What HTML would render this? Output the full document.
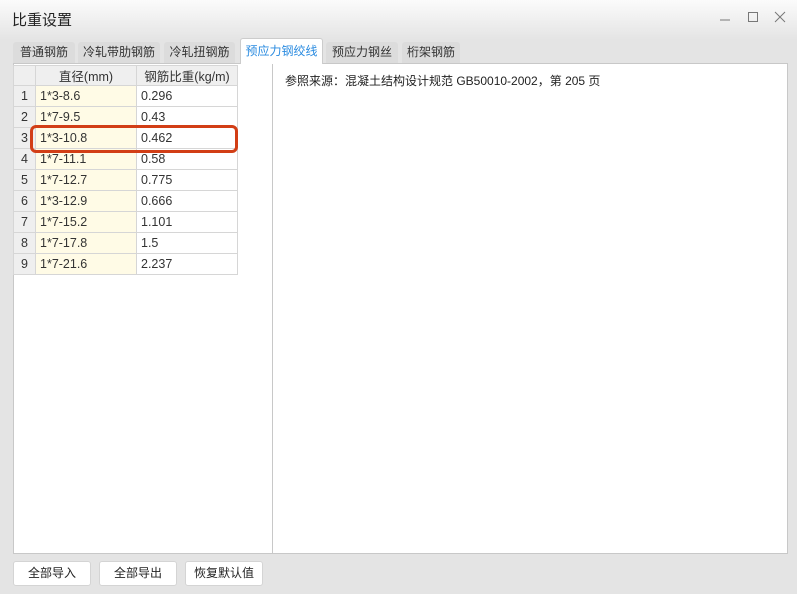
<!DOCTYPE html>
<html><head><meta charset="utf-8"><style>
*{margin:0;padding:0;box-sizing:border-box}
body{width:797px;height:594px;overflow:hidden;background:#e4e4e4;font-family:"Liberation Sans","Noto Sans CJK SC",sans-serif;font-size:12px;color:#333;position:relative}
.top{position:absolute;left:0;top:0;width:797px;height:40px;background:linear-gradient(#fbfbfb,#e4e4e4)}
.title{position:absolute;left:12px;top:9px;font-size:15px;color:#222}
.tab{position:absolute;top:42px;height:21px;background:#dcdcdc;border-radius:3px 3px 0 0;font-size:12px;line-height:21px;text-align:center;color:#333}
.tab.a{top:38px;height:26px;background:#fff;border:1px solid #ccc;border-bottom:none;color:#2a8be0;line-height:24px}
.left{position:absolute;left:13px;top:63px;width:260px;height:491px;background:#fff;border:1px solid #c8c8c8}
.right{position:absolute;left:273px;top:63px;width:515px;height:491px;background:#fff;border-top:1px solid #c8c8c8;border-right:1px solid #c8c8c8;border-bottom:1px solid #c8c8c8}
table{position:absolute;left:-1px;top:1px;border-collapse:collapse}
td{border:1px solid #d6d6d6;height:21px;padding:0 0 0 4px;font-size:12.5px;white-space:nowrap}
td.i{width:22px;background:#efefef;text-align:center;padding:0}
td.c1{width:101px;background:#fffbe6}
td.c2{width:101px}
tr.h td{background:#efefef;text-align:center;padding:0;height:20px}
.btn{position:absolute;top:561px;width:78px;height:25px;background:#fff;border:1px solid #d4d4d4;border-radius:3px;text-align:center;line-height:23px;font-size:12px;color:#222}
.hl{position:absolute;left:30px;top:125px;width:208px;height:28px;border:3px solid #d23e16;border-radius:6px}
</style></head><body>
<div class="top"></div>
<div class="title">比重设置</div>
<svg style="position:absolute;left:718px;top:10px" width="70" height="16">
<line x1="2" y1="10" x2="12" y2="10" stroke="#777" stroke-width="1"/>
<rect x="30.5" y="2.5" width="9" height="9" fill="none" stroke="#777"/>
<line x1="57" y1="2" x2="67" y2="12" stroke="#777"/><line x1="67" y1="2" x2="57" y2="12" stroke="#777"/>
</svg>
<div class="tab" style="left:13px;width:62px">普通钢筋</div>
<div class="tab" style="left:78px;width:82px">冷轧带肋钢筋</div>
<div class="tab" style="left:164px;width:71px">冷轧扭钢筋</div>
<div class="tab" style="left:326px;width:72px">预应力钢丝</div>
<div class="tab" style="left:402px;width:58px">桁架钢筋</div>
<div class="left">
<table>
<tr class="h"><td class="i"></td><td class="c1" style="background:#efefef">直径(mm)</td><td class="c2">钢筋比重(kg/m)</td></tr>
<tr><td class="i">1</td><td class="c1">1*3-8.6</td><td class="c2">0.296</td></tr>
<tr><td class="i">2</td><td class="c1">1*7-9.5</td><td class="c2">0.43</td></tr>
<tr><td class="i">3</td><td class="c1">1*3-10.8</td><td class="c2">0.462</td></tr>
<tr><td class="i">4</td><td class="c1">1*7-11.1</td><td class="c2">0.58</td></tr>
<tr><td class="i">5</td><td class="c1">1*7-12.7</td><td class="c2">0.775</td></tr>
<tr><td class="i">6</td><td class="c1">1*3-12.9</td><td class="c2">0.666</td></tr>
<tr><td class="i">7</td><td class="c1">1*7-15.2</td><td class="c2">1.101</td></tr>
<tr><td class="i">8</td><td class="c1">1*7-17.8</td><td class="c2">1.5</td></tr>
<tr><td class="i">9</td><td class="c1">1*7-21.6</td><td class="c2">2.237</td></tr>
</table>
</div>
<div class="right"><div style="position:absolute;left:12px;top:8px;color:#222">参照来源：混凝土结构设计规范 GB50010-2002，第 205 页</div></div>
<div class="tab a" style="left:240px;width:83px">预应力钢绞线</div>
<div class="hl"></div>
<div class="btn" style="left:13px">全部导入</div>
<div class="btn" style="left:99px">全部导出</div>
<div class="btn" style="left:185px">恢复默认值</div>
</body></html>
